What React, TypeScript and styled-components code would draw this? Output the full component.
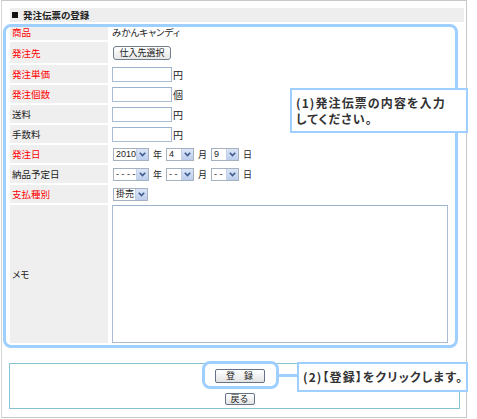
import React from "react";
import styled, { createGlobalStyle } from "styled-components";

const GlobalStyle = createGlobalStyle`
  body {
    margin: 0;
    background: #fff;
    font-family: "Noto Sans CJK JP", "Liberation Sans", sans-serif;
    font-feature-settings: "palt";
    color: #222;
  }
`;

const Stage = styled.div`
  position: relative;
  width: 477px;
  height: 419px;
  overflow: hidden;
`;

const Frame = styled.div`
  box-sizing: border-box;
  margin-left: 1px;
  width: 466px;
  height: 418px;
  border: 1px solid #c9c9c9;
  border-left-color: #d6d6d6;
  padding: 7px 2px 0 8px;
`;

const Heading = styled.div`
  height: 14px;
  background: #eeeeee;
  display: flex;
  align-items: center;
  gap: 5px;
  padding-left: 2px;
  font-size: 9.5px;
  font-weight: bold;
  line-height: 14px;
`;

const Square = styled.span`
  width: 6px;
  height: 6px;
  background: #111;
`;

const FormTable = styled.table`
  width: 452px;
  border-collapse: separate;
  border-spacing: 0 2px;
  font-size: 9.5px;
`;

const Row = styled.tr<{ $h: number }>`
  height: ${({ $h }) => $h}px;
`;

const LabelCell = styled.th<{ $required?: boolean }>`
  width: 96px;
  padding: 0 0 0 2px;
  background: #efefef;
  text-align: left;
  font-weight: normal;
  color: ${({ $required }) => ($required ? "#ff0000" : "#222")};
  border-right: 2px solid #fff;
  vertical-align: middle;
`;

const ValueCell = styled.td`
  padding: 0 0 0 2px;
  vertical-align: middle;
  white-space: nowrap;
`;

const Line = styled.div`
  display: flex;
  align-items: center;
`;

const TextField = styled.input`
  box-sizing: border-box;
  width: 60px;
  height: 15px;
  margin: 0;
  padding: 0 2px;
  border: 1px solid #a9bcd3;
  border-top-color: #9cb1cb;
  background: #fff;
`;

const Unit = styled.span`
  margin-left: 1px;
  font-size: 10px;
`;

const PickButton = styled.button`
  box-sizing: border-box;
  width: 58px;
  height: 14px;
  padding: 0;
  margin-left: 1px;
  border: 1px solid #6f7d8c;
  border-radius: 3px;
  background: linear-gradient(#ffffff, #e6e6e6);
  font-family: inherit;
  font-size: 9px;
  line-height: 12px;
  color: #222;
`;

const Dropdown = styled.span<{ $w: number }>`
  box-sizing: border-box;
  display: inline-flex;
  align-items: stretch;
  width: ${({ $w }) => $w}px;
  height: 13px;
  margin-left: 1px;
  border: 1px solid #a7b2c0;
  background: #fff;
`;

const DropValue = styled.span`
  flex: 1;
  padding-left: 2px;
  font-family: "Liberation Sans", "Noto Sans CJK JP", sans-serif;
  font-size: 9px;
  line-height: 11px;
  white-space: nowrap;
  overflow: hidden;
`;

const DropArrow = styled.span`
  flex: none;
  width: 11px;
  display: flex;
  align-items: center;
  justify-content: center;
  background: linear-gradient(#dbe5f7, #bccdec);
  border-left: 1px solid #c3cfe3;
`;

const DateSep = styled.span`
  margin: 0 3px 0 4px;
  font-size: 9px;
`;

const Memo = styled.textarea`
  box-sizing: border-box;
  display: block;
  width: 336px;
  height: 138px;
  margin: 0;
  border: 1px solid #a9bcd3;
  border-top-color: #9db2cc;
  resize: none;
`;

const ActionBox = styled.div`
  box-sizing: border-box;
  width: 451px;
  height: 46px;
  margin: 18px 0 0 -1px;
  border: 1px solid #86c2d2;
  display: flex;
  flex-direction: column;
  align-items: center;
  padding: 5px 0 0 10px;
  gap: 10px;
`;

const ActionButton = styled.button<{ $w: number; $h: number }>`
  box-sizing: border-box;
  width: ${({ $w }) => $w}px;
  height: ${({ $h }) => $h}px;
  padding: 0;
  border: 1px solid #65748a;
  border-radius: 2px;
  background: linear-gradient(#ffffff, #e3e3e3);
  font-family: inherit;
  font-size: 9px;
  line-height: 10px;
  color: #222;
`;

const Highlight = styled.div<{ $x: number; $y: number; $w: number; $h: number }>`
  position: absolute;
  box-sizing: border-box;
  left: ${({ $x }) => $x}px;
  top: ${({ $y }) => $y}px;
  width: ${({ $w }) => $w}px;
  height: ${({ $h }) => $h}px;
  border: 3px solid #9fcfff;
  border-radius: 8px;
  pointer-events: none;
`;

const Callout = styled.div<{ $x: number; $y: number; $w: number; $h: number }>`
  position: absolute;
  box-sizing: border-box;
  left: ${({ $x }) => $x}px;
  top: ${({ $y }) => $y}px;
  width: ${({ $w }) => $w}px;
  height: ${({ $h }) => $h}px;
  border: 2px solid #9fcfff;
  background: #fff;
  padding: 5px 0 0 4px;
  font-size: 12px;
  font-weight: bold;
  line-height: 16px;
  letter-spacing: 1.1px;
  white-space: nowrap;
  color: #333;
`;

const Connector = styled.div`
  position: absolute;
  left: 278px;
  top: 374px;
  width: 20px;
  height: 3px;
  background: #9fcfff;
`;

const Chevron = () => (
  <svg width="7" height="5" viewBox="0 0 7 5">
    <path d="M0.8 0.8 L3.5 3.6 L6.2 0.8" fill="none" stroke="#3d5b8c" strokeWidth="1.6" />
  </svg>
);

const Select: React.FC<{ w: number; value: string }> = ({ w, value }) => (
  <Dropdown $w={w}>
    <DropValue>{value}</DropValue>
    <DropArrow>
      <Chevron />
    </DropArrow>
  </Dropdown>
);

const App: React.FC = () => {
  return (
    <Stage>
      <GlobalStyle />
      <Frame>
        <Heading>
          <Square />
          発注伝票の登録
        </Heading>
        <FormTable>
          <tbody>
            <Row $h={16}>
              <LabelCell $required>商品</LabelCell>
              <ValueCell>みかんキャンディ</ValueCell>
            </Row>
            <Row $h={21}>
              <LabelCell $required>発注先</LabelCell>
              <ValueCell>
                <PickButton>仕入先選択</PickButton>
              </ValueCell>
            </Row>
            <Row $h={18}>
              <LabelCell $required>発注単価</LabelCell>
              <ValueCell>
                <Line>
                  <TextField />
                  <Unit>円</Unit>
                </Line>
              </ValueCell>
            </Row>
            <Row $h={18}>
              <LabelCell $required>発注個数</LabelCell>
              <ValueCell>
                <Line>
                  <TextField />
                  <Unit>個</Unit>
                </Line>
              </ValueCell>
            </Row>
            <Row $h={18}>
              <LabelCell>送料</LabelCell>
              <ValueCell>
                <Line>
                  <TextField />
                  <Unit>円</Unit>
                </Line>
              </ValueCell>
            </Row>
            <Row $h={18}>
              <LabelCell>手数料</LabelCell>
              <ValueCell>
                <Line>
                  <TextField />
                  <Unit>円</Unit>
                </Line>
              </ValueCell>
            </Row>
            <Row $h={18}>
              <LabelCell $required>発注日</LabelCell>
              <ValueCell>
                <Line>
                  <Select w={36} value="2010" />
                  <DateSep>年</DateSep>
                  <Select w={28} value="4" />
                  <DateSep>月</DateSep>
                  <Select w={28} value="9" />
                  <DateSep>日</DateSep>
                </Line>
              </ValueCell>
            </Row>
            <Row $h={18}>
              <LabelCell>納品予定日</LabelCell>
              <ValueCell>
                <Line>
                  <Select w={36} value="- - - -" />
                  <DateSep>年</DateSep>
                  <Select w={28} value="- -" />
                  <DateSep>月</DateSep>
                  <Select w={28} value="- -" />
                  <DateSep>日</DateSep>
                </Line>
              </ValueCell>
            </Row>
            <Row $h={18}>
              <LabelCell $required>支払種別</LabelCell>
              <ValueCell>
                <Line>
                  <Select w={35} value="掛売" />
                </Line>
              </ValueCell>
            </Row>
            <Row $h={138}>
              <LabelCell>メモ</LabelCell>
              <ValueCell>
                <Memo />
              </ValueCell>
            </Row>
          </tbody>
        </FormTable>
        <ActionBox>
          <ActionButton $w={50} $h={14}>登　録</ActionButton>
          <ActionButton $w={30} $h={12}>戻る</ActionButton>
        </ActionBox>
      </Frame>

      <Highlight $x={3} $y={24} $w={455} $h={324} />
      <Callout $x={290} $y={88} $w={178} $h={45}>
        (1)発注伝票の内容を入力
        <br />
        してください。
      </Callout>

      <Highlight $x={202} $y={361} $w={77} $h={28} />
      <Connector />
      <Callout $x={297} $y={362} $w={171} $h={30}>
        (2)【登録】をクリックします。
      </Callout>
    </Stage>
  );
};

export default App;
